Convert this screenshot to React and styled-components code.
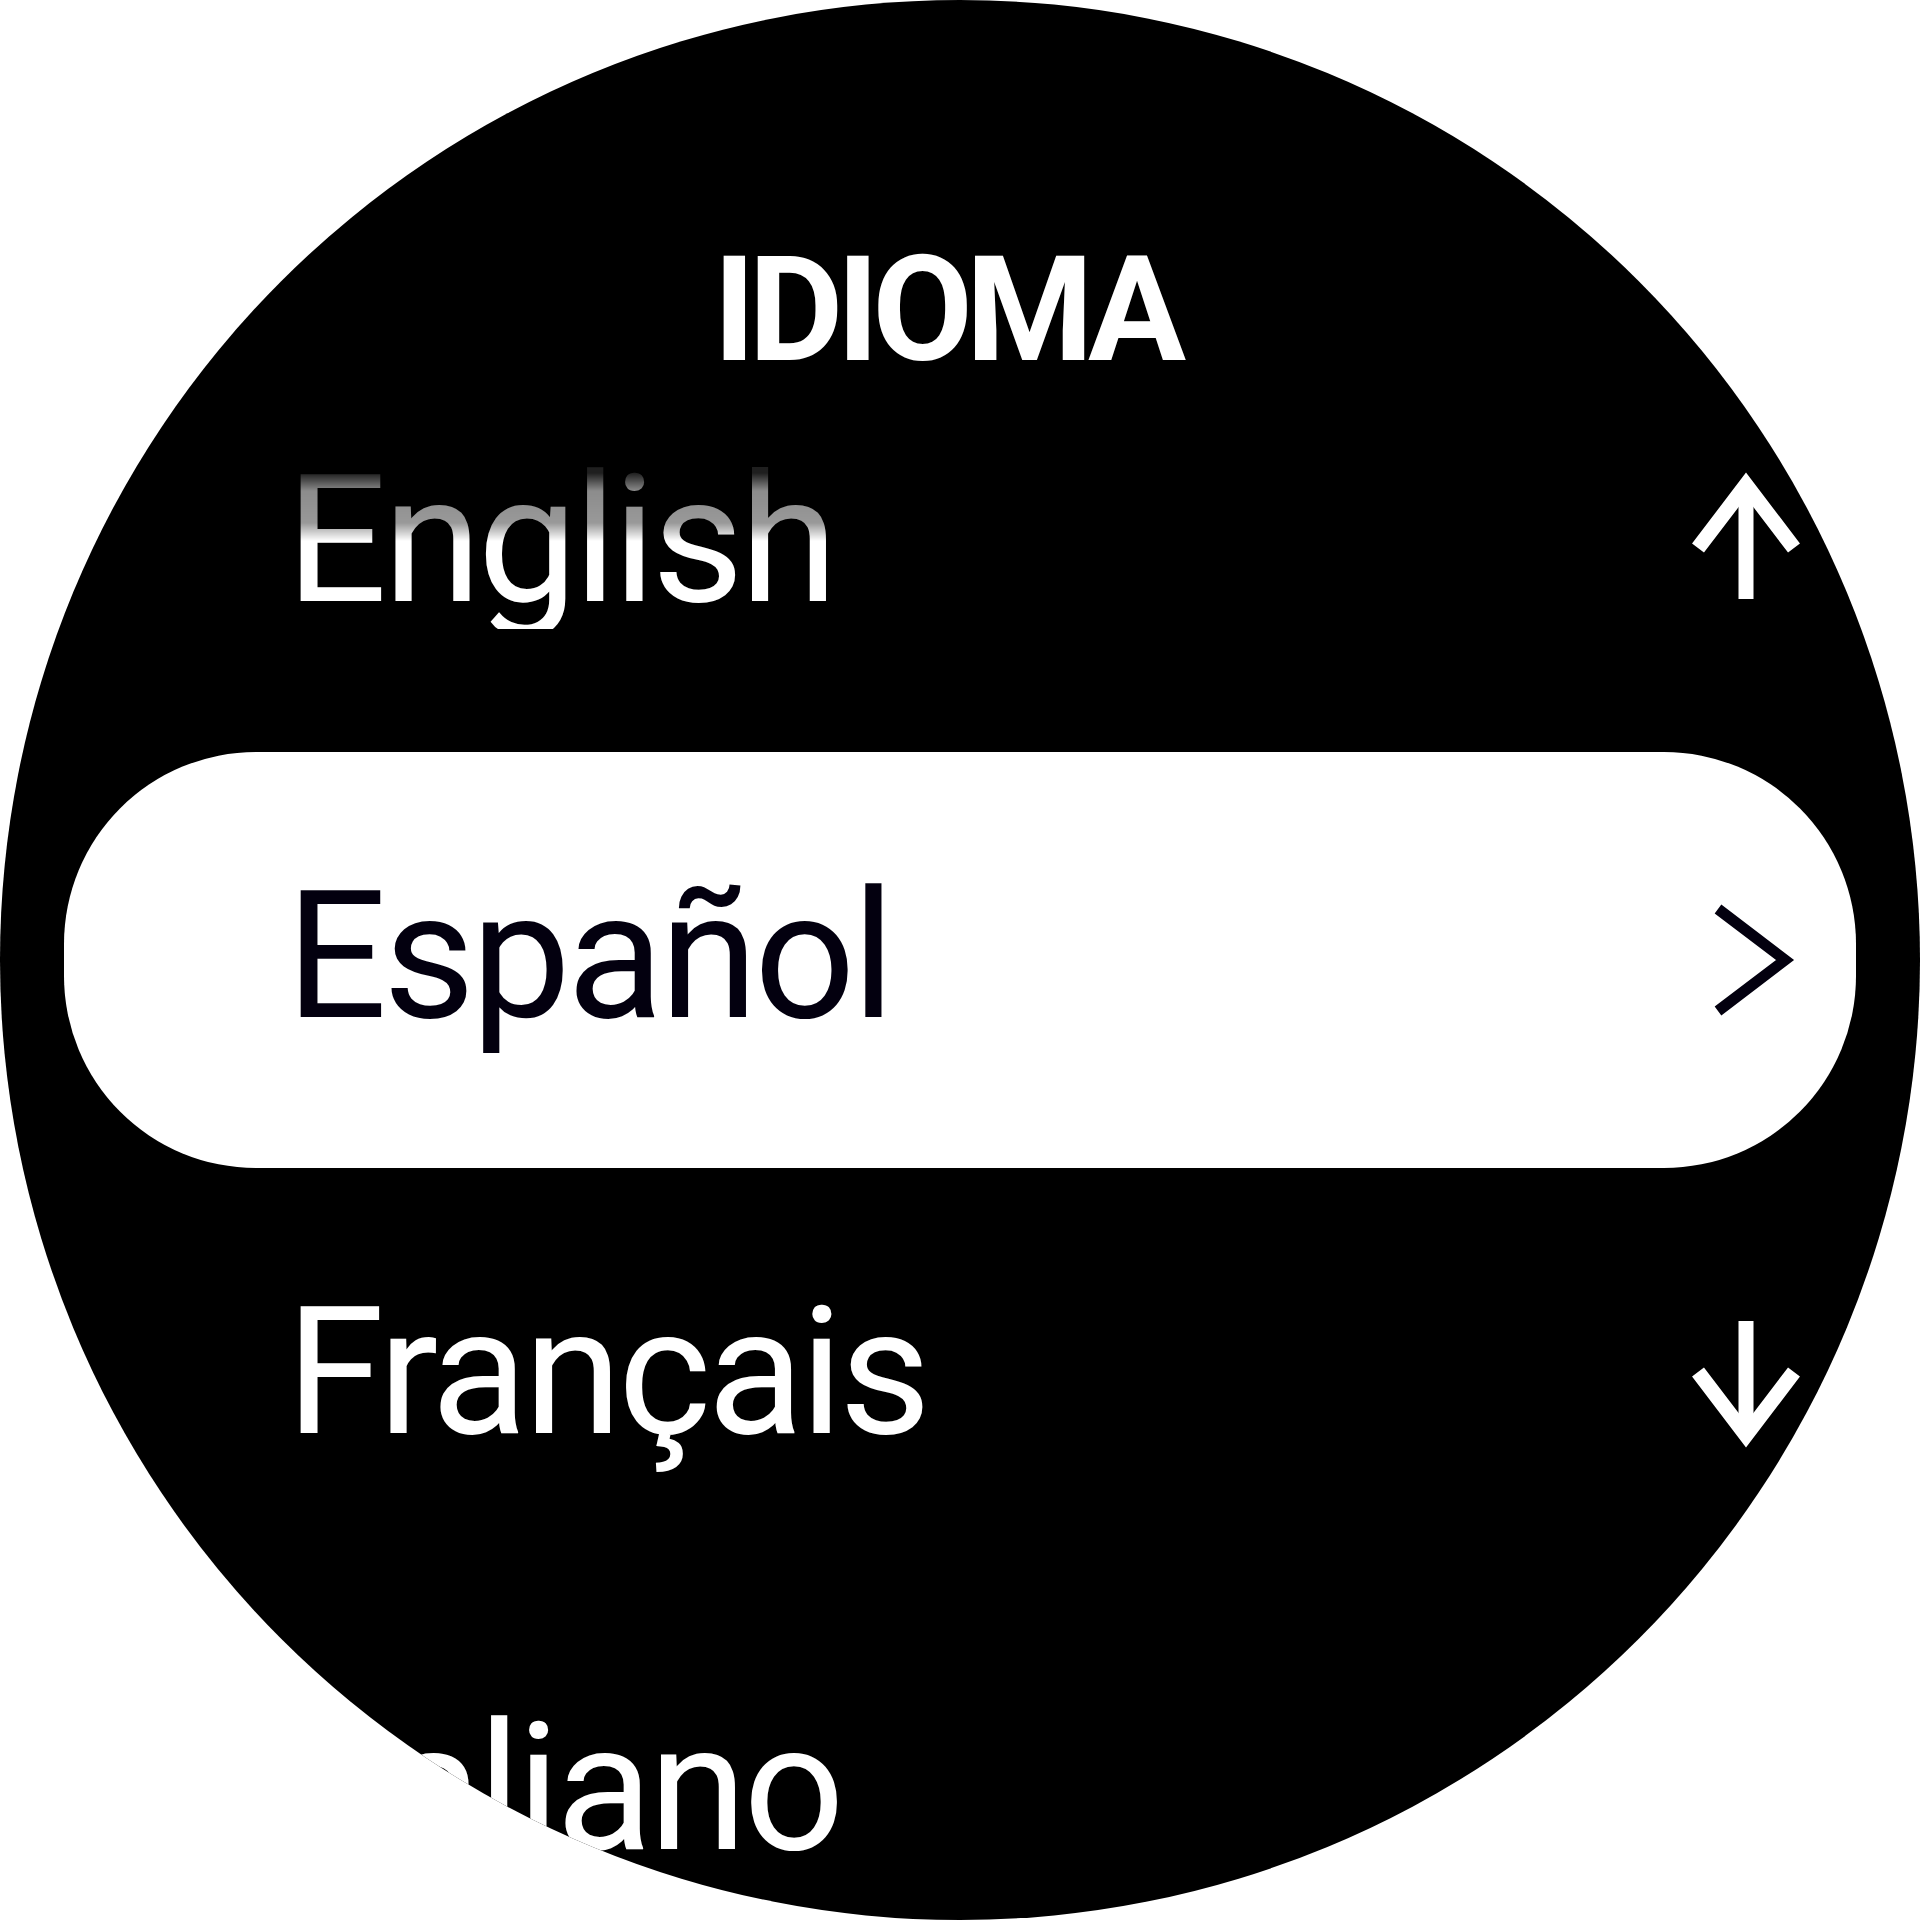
import React from "react";
import styled, { createGlobalStyle, css } from "styled-components";

const GlobalStyle = createGlobalStyle`
  html, body {
    margin: 0;
    padding: 0;
    background: #fff;
  }
  body {
    font-family: Roboto, "Liberation Sans", sans-serif;
  }
`;

const Watch = styled.div`
  width: 1920px;
  height: 1920px;
  box-sizing: border-box;
  border-radius: 50%;
  background: #000;
  overflow: hidden;
  display: flex;
  flex-direction: column;
  padding-top: 261px;
`;

const Title = styled.h1`
  margin: 0;
  padding-right: 28px;
  color: #fff;
  text-align: center;
  font-size: 146px;
  font-weight: 700;
  line-height: 100px;
  letter-spacing: -7px;
`;

const List = styled.ul`
  list-style: none;
  margin: -25px 0 0;
  padding: 0;
`;

const Row = styled.li`
  height: 416px;
  margin: 0 64px;
  padding: 0 50px 0 222px;
  box-sizing: border-box;
  display: flex;
  align-items: center;
  justify-content: space-between;
  border-radius: 192px;
  background: ${(p) => (p.$selected ? "#fff" : "transparent")};
  color: ${(p) => (p.$selected ? "#03000f" : "#fff")};
`;

const Label = styled.span`
  margin-top: -8px;
  font-size: 178px;
  line-height: 1;
  letter-spacing: -4px;
  white-space: nowrap;
  ${(p) =>
    p.$faded &&
    css`
      -webkit-mask-image: linear-gradient(
        to bottom,
        rgba(0, 0, 0, 0.12) 22px,
        rgba(0, 0, 0, 0.55) 40px,
        rgba(0, 0, 0, 0.6) 72px,
        #000 90px
      );
      mask-image: linear-gradient(
        to bottom,
        rgba(0, 0, 0, 0.12) 22px,
        rgba(0, 0, 0, 0.55) 40px,
        rgba(0, 0, 0, 0.6) 72px,
        #000 90px
      );
    `}
`;

const IconSlot = styled.svg`
  width: 120px;
  height: 200px;
  flex-shrink: 0;
  transform: ${(p) => (p.$flip ? "rotate(180deg)" : "none")};
`;

const Arrow = ({ down }) => (
  <IconSlot viewBox="0 0 120 200" $flip={down}>
    <g fill="none" stroke="currentColor" strokeWidth="15" strokeLinejoin="miter">
      <path d="M60 44 V155" />
      <path d="M12 104 L60 41 L108 104" />
    </g>
  </IconSlot>
);

const Chevron = () => (
  <IconSlot viewBox="0 0 120 200">
    <path
      d="M32 49 L99 100 L32 151"
      fill="none"
      stroke="currentColor"
      strokeWidth="11"
      strokeLinejoin="miter"
    />
  </IconSlot>
);

const languages = [
  { name: "English", icon: "up", faded: true },
  { name: "Español", icon: "chevron", selected: true },
  { name: "Français", icon: "down" },
  { name: "Italiano" },
];

const App = () => {
  return (
    <>
      <GlobalStyle />
      <Watch>
        <Title>IDIOMA</Title>
        <List>
          {languages.map((lang) => (
            <Row key={lang.name} $selected={lang.selected}>
              <Label $faded={lang.faded}>{lang.name}</Label>
              {lang.icon === "up" && <Arrow />}
              {lang.icon === "down" && <Arrow down />}
              {lang.icon === "chevron" && <Chevron />}
            </Row>
          ))}
        </List>
      </Watch>
    </>
  );
};

export default App;
